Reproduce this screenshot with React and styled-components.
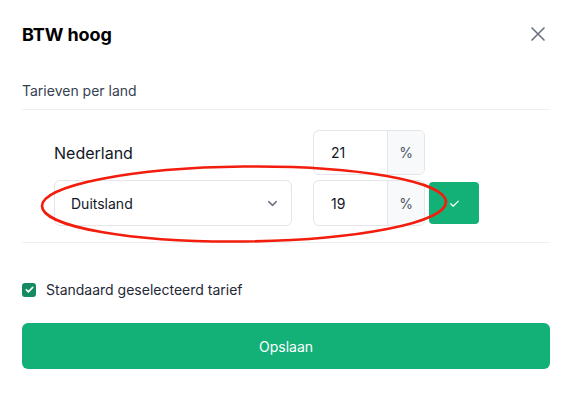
import React from 'react'
import styled, { createGlobalStyle } from 'styled-components'

const GlobalStyle = createGlobalStyle`
  html, body {
    margin: 0;
    padding: 0;
    background: #ffffff;
  }
  body {
    font-family: 'Inter', 'Liberation Sans', sans-serif;
    color: #111827;
  }
`

const Modal = styled.div`
  position: relative;
  width: 574px;
  height: 415px;
  box-sizing: border-box;
  padding: 21px 24px 0 22px;
  display: flex;
  flex-direction: column;
`

const Header = styled.div`
  display: flex;
  justify-content: space-between;
  align-items: center;
  height: 26px;
`

const Title = styled.h2`
  margin: 0;
  font-size: 18px;
  font-weight: 700;
  color: #000;
  letter-spacing: -0.1px;
`

const CloseButton = styled.button`
  border: 0;
  background: none;
  padding: 0;
  width: 24px;
  height: 24px;
  display: flex;
  align-items: center;
  justify-content: center;
  color: #6b7280;
  cursor: pointer;
`

const SectionLabel = styled.div`
  margin-top: 35px;
  padding-bottom: 10px;
  border-bottom: 1px solid #eeeff1;
  font-size: 14px;
  color: #374151;
`

const Rates = styled.div`
  padding: 20px 0 16px 32px;
  border-bottom: 1px solid #eeeff1;
  display: flex;
  flex-direction: column;
  gap: 5px;
`

const Row = styled.div`
  display: flex;
  align-items: center;
`

const CountryName = styled.div`
  width: 238px;
  margin-right: 21px;
  font-size: 16px;
  color: #111827;
`

const Select = styled.div`
  width: 238px;
  height: 46px;
  box-sizing: border-box;
  margin-right: 21px;
  border: 1px solid #e3e5e8;
  border-radius: 6px;
  padding: 0 11px 0 16px;
  display: flex;
  align-items: center;
  justify-content: space-between;
  font-size: 14px;
  color: #111827;
`

const PercentInput = styled.div`
  width: 112px;
  height: ${p => p.$h}px;
  box-sizing: border-box;
  border: 1px solid #e3e5e8;
  border-radius: 6px;
  display: flex;
  overflow: hidden;
`

const Value = styled.div`
  flex: 1;
  padding-left: 17px;
  display: flex;
  align-items: center;
  font-size: 14px;
  color: #111827;
`

const Addon = styled.div`
  width: 36px;
  border-left: 1px solid #e3e5e8;
  background: #f8f9fb;
  display: flex;
  align-items: center;
  justify-content: center;
  font-size: 14px;
  color: #4b5563;
`

const ConfirmButton = styled.button`
  margin-left: 4px;
  width: 50px;
  height: 42px;
  border: 0;
  border-radius: 4px;
  background: #13b077;
  color: #fff;
  display: flex;
  align-items: center;
  justify-content: center;
  padding: 0;
`

const CheckRow = styled.label`
  margin-top: 38px;
  display: flex;
  align-items: center;
  gap: 10px;
  font-size: 14px;
  color: #1f2937;
`

const CheckBox = styled.span`
  width: 14px;
  height: 14px;
  border-radius: 3px;
  background: #138a5f;
  display: flex;
  align-items: center;
  justify-content: center;
`

const SaveButton = styled.button`
  margin-top: 25px;
  height: 46px;
  border: 0;
  border-radius: 6px;
  background: #13b077;
  color: #fff;
  font-family: inherit;
  font-size: 14px;
`

const Annotation = styled.svg`
  position: absolute;
  left: 0;
  top: 0;
  pointer-events: none;
`

const Check = ({ size, width }) => (
  <svg width={size} height={size} viewBox="0 0 24 24" fill="none" stroke="#fff" strokeWidth={width} strokeLinecap="round" strokeLinejoin="round">
    <path d="M5 12.5l4.5 4.5L19 7.5" />
  </svg>
)

export default function App() {
  return (
    <>
      <GlobalStyle />
      <Modal>
        <Header>
          <Title>BTW hoog</Title>
          <CloseButton aria-label="Sluiten">
            <svg width="18" height="18" viewBox="0 0 24 24" fill="none" stroke="currentColor" strokeWidth="2.2" strokeLinecap="round">
              <path d="M4 4l16 16M20 4L4 20" />
            </svg>
          </CloseButton>
        </Header>

        <SectionLabel>Tarieven per land</SectionLabel>

        <Rates>
          <Row>
            <CountryName>Nederland</CountryName>
            <PercentInput $h={45}>
              <Value>21</Value>
              <Addon>%</Addon>
            </PercentInput>
          </Row>
          <Row>
            <Select>
              Duitsland
              <svg width="15" height="15" viewBox="0 0 24 24" fill="none" stroke="#6b7280" strokeWidth="2.3" strokeLinecap="round" strokeLinejoin="round">
                <path d="M6 9l6 6 6-6" />
              </svg>
            </Select>
            <PercentInput $h={46}>
              <Value>19</Value>
              <Addon>%</Addon>
            </PercentInput>
            <ConfirmButton aria-label="Bevestigen">
              <Check size={13} width={2.2} />
            </ConfirmButton>
          </Row>
        </Rates>

        <CheckRow>
          <CheckBox>
            <Check size={11} width={3.6} />
          </CheckBox>
          Standaard geselecteerd tarief
        </CheckRow>

        <SaveButton>Opslaan</SaveButton>

        <Annotation width="574" height="415">
          <ellipse cx="244" cy="204" rx="202" ry="37.5" fill="none" stroke="#f21d0c" strokeWidth="2.6" transform="rotate(-0.6 244 204)" />
        </Annotation>
      </Modal>
    </>
  )
}
